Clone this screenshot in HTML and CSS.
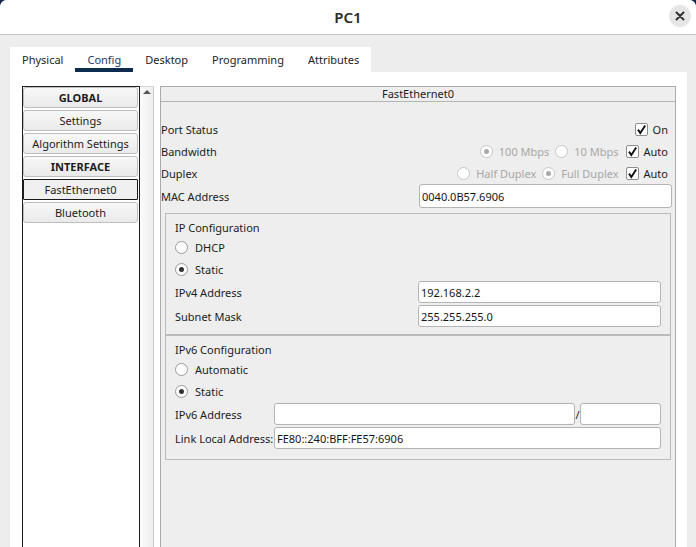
FILE: index.html
```html
<!DOCTYPE html>
<html lang="en">
<head>
<meta charset="utf-8">
<title>PC1</title>
<link rel="stylesheet" href="styles.css">
</head>
<body>
<div class="window">
  <header class="titlebar">
    <span class="title">PC1</span>
    <button class="close" aria-label="Close">
      <svg width="10" height="10" viewBox="0 0 10 10"><path d="M1.5 1.5 L8.5 8.5 M8.5 1.5 L1.5 8.5" stroke="#333" stroke-width="2" stroke-linecap="round"/></svg>
    </button>
  </header>
  <div class="content">
    <nav class="tabs">
      <span class="tab">Physical</span>
      <span class="tab active">Config</span>
      <span class="tab">Desktop</span>
      <span class="tab">Programming</span>
      <span class="tab">Attributes</span>
    </nav>
    <div class="pane">
      <div class="list">
        <div class="item bold">GLOBAL</div>
        <div class="item">Settings</div>
        <div class="item">Algorithm Settings</div>
        <div class="item bold">INTERFACE</div>
        <div class="item selected">FastEthernet0</div>
        <div class="item">Bluetooth</div>
      </div>
      <div class="scrollbar"><span class="arrow"></span></div>
      <section class="panel">
        <div class="panel-head">FastEthernet0</div>
        <div class="panel-body">
          <div class="row">
            <span class="label">Port Status</span>
            <div class="controls">
              <span class="check"><svg width="11" height="11" viewBox="0 0 11 11"><path d="M2 5.6 L4.3 9 L9.2 1.6" fill="none" stroke="#111" stroke-width="1.9"/></svg></span>
              <span>On</span>
            </div>
          </div>
          <div class="row">
            <span class="label">Bandwidth</span>
            <div class="controls">
              <span class="opt disabled"><span class="radio on"></span><span>100 Mbps</span></span>
              <span class="opt disabled"><span class="radio"></span><span>10 Mbps</span></span>
              <span class="check"><svg width="11" height="11" viewBox="0 0 11 11"><path d="M2 5.6 L4.3 9 L9.2 1.6" fill="none" stroke="#111" stroke-width="1.9"/></svg></span>
              <span>Auto</span>
            </div>
          </div>
          <div class="row">
            <span class="label">Duplex</span>
            <div class="controls">
              <span class="opt disabled"><span class="radio"></span><span>Half Duplex</span></span>
              <span class="opt disabled"><span class="radio on"></span><span>Full Duplex</span></span>
              <span class="check"><svg width="11" height="11" viewBox="0 0 11 11"><path d="M2 5.6 L4.3 9 L9.2 1.6" fill="none" stroke="#111" stroke-width="1.9"/></svg></span>
              <span>Auto</span>
            </div>
          </div>
          <div class="row mac">
            <span class="label">MAC Address</span>
            <input class="field mac-field" type="text" value="0040.0B57.6906">
          </div>

          <div class="group ipv4">
            <div class="group-title">IP Configuration</div>
            <div class="radio-row"><span class="radio"></span><span>DHCP</span></div>
            <div class="radio-row"><span class="radio on"></span><span>Static</span></div>
            <div class="field-row first">
              <span class="flabel wide">IPv4 Address</span>
              <input class="field grow" type="text" value="192.168.2.2">
            </div>
            <div class="field-row">
              <span class="flabel wide">Subnet Mask</span>
              <input class="field grow" type="text" value="255.255.255.0">
            </div>
          </div>

          <div class="group ipv6">
            <div class="group-title">IPv6 Configuration</div>
            <div class="radio-row"><span class="radio"></span><span>Automatic</span></div>
            <div class="radio-row"><span class="radio on"></span><span>Static</span></div>
            <div class="field-row first">
              <span class="flabel narrow">IPv6 Address</span>
              <input class="field addr6" type="text" value="">
              <span class="slash">/</span>
              <input class="field grow" type="text" value="">
            </div>
            <div class="field-row">
              <span class="flabel narrow">Link Local Address:</span>
              <input class="field grow" type="text" value="FE80::240:BFF:FE57:6906">
            </div>
          </div>
        </div>
      </section>
    </div>
  </div>
</div>
</body>
</html>
```

FILE: styles.css
```css
* {
  box-sizing: border-box;
  margin: 0;
  padding: 0;
}

html,
body {
  width: 696px;
  height: 547px;
  overflow: hidden;
  background: #17294a;
}

body {
  font-family: "Noto Sans", "DejaVu Sans", sans-serif;
  font-size: 11px;
  color: #1c1c1c;
}

.window {
  width: 696px;
  height: 547px;
  background: #ededed;
  border-radius: 7px 7px 0 0;
  overflow: hidden;
  display: flex;
  flex-direction: column;
}

/* Title bar */
.titlebar {
  height: 35px;
  flex: none;
  background: #ffffff;
  border-bottom: 1px solid #c6c6c6;
  display: flex;
  align-items: center;
  justify-content: center;
  position: relative;
}

.title {
  font-size: 15px;
  font-weight: 600;
  color: #2a2a2a;
}

.close {
  position: absolute;
  right: 5px;
  top: 5px;
  width: 22px;
  height: 22px;
  border-radius: 50%;
  background: #e5e5e5;
  border: none;
  display: flex;
  align-items: center;
  justify-content: center;
}

/* Content */
.content {
  flex: 1;
  min-height: 0;
  padding: 12px 9px 0 10px;
  display: flex;
  flex-direction: column;
}

.tabs {
  display: flex;
  align-self: flex-start;
  background: #ffffff;
  height: 25px;
  flex: none;
}

.tab {
  padding: 0 12px;
  display: flex;
  align-items: center;
  color: #222;
}

.tab.active {
  color: #1d3a66;
  box-shadow: inset 0 -4px 0 #0f2a4f;
}

.pane {
  flex: 1;
  min-height: 0;
  background: #ffffff;
  display: flex;
  padding: 14px 11px 0 12px;
}

/* Left list */
.list {
  width: 118px;
  flex: none;
  border: 1px solid #1e1e1e;
  border-bottom: none;
  background: #ffffff;
  padding-right: 1px;
  display: flex;
  flex-direction: column;
  gap: 2px;
}

.item {
  height: 21px;
  line-height: 19px;
  text-align: center;
  border: 1px solid #bdbdbd;
  border-radius: 3px;
  background: linear-gradient(#f8f8f8, #eaeaea);
  color: #1c1c1c;
  white-space: nowrap;
}

.item.bold {
  font-weight: 700;
}

.item.selected {
  border-color: #1a1a1a;
  border-radius: 1px;
  background: #f0f0f0;
}

.scrollbar {
  width: 14px;
  flex: none;
  border-right: 1px solid #cacaca;
  border-top: 1px solid #d6d6d6;
  background: linear-gradient(to right, #fbfbfb, #eeeeee);
  display: flex;
  justify-content: center;
  padding-top: 3px;
}

.arrow {
  width: 0;
  height: 0;
  border-left: 4px solid transparent;
  border-right: 4px solid transparent;
  border-bottom: 4px solid #555;
}

/* Right panel */
.panel {
  width: 516px;
  flex: none;
  margin-left: 6px;
  border: 1px solid #ababab;
  border-bottom: none;
  background: #eeeeee;
  display: flex;
  flex-direction: column;
  min-width: 0;
}

.panel-head {
  height: 15px;
  line-height: 13px;
  text-align: center;
  border-bottom: 1px solid #b4b4b4;
}

.panel-body {
  padding-top: 16px;
  display: flex;
  flex-direction: column;
  min-width: 0;
}

.row {
  display: flex;
  align-items: center;
  height: 22px;
}

.row .label {
  flex: 1;
}

.controls {
  display: flex;
  align-items: center;
  margin-right: 7px;
}

.opt {
  display: flex;
  align-items: center;
  gap: 6px;
  margin-right: 6px;
}

.opt.disabled {
  color: #a7a7a7;
}

.check {
  width: 13px;
  height: 13px;
  border: 1px solid #8e8e8e;
  border-radius: 2px;
  background: #ffffff;
  display: flex;
  align-items: center;
  justify-content: center;
  margin: 0 5px 0 1px;
}

.radio {
  width: 13px;
  height: 13px;
  border: 1px solid #9a9a9a;
  border-radius: 50%;
  background: #ffffff;
  display: flex;
  align-items: center;
  justify-content: center;
  flex: none;
}

.radio.on::after {
  content: "";
  width: 5px;
  height: 5px;
  border-radius: 50%;
  background: #333333;
}

.disabled .radio {
  border-color: #c6c6c6;
}

.disabled .radio.on::after {
  background: #a9a9a9;
}

.row.mac {
  height: 24px;
}

.field {
  font: inherit;
  color: #151515;
  background: #ffffff;
  border: 1px solid #b4b4b4;
  border-radius: 3px;
  height: 22px;
  padding: 0 2px;
  outline: none;
  min-width: 0;
}

.mac-field {
  width: 253px;
  height: 24px;
  margin-right: 3px;
}

/* Group boxes */
.group {
  border: 1px solid #bbbbbb;
  margin: 0 4px;
  padding: 5px 9px 7px;
  display: flex;
  flex-direction: column;
  min-width: 0;
}

.group.ipv4 {
  margin-top: 5px;
}

.group.ipv6 {
  padding-bottom: 10px;
}

.group-title {
  height: 17px;
  line-height: 17px;
}

.radio-row {
  height: 22px;
  display: flex;
  align-items: center;
  gap: 7px;
}

.field-row {
  display: flex;
  align-items: center;
  height: 22px;
  margin-top: 2px;
  min-width: 0;
}

.field-row.first {
  margin-top: 1px;
}

.flabel {
  flex: none;
  white-space: nowrap;
}

.flabel.wide {
  width: 243px;
}

.flabel.narrow {
  width: 99px;
}

.grow {
  flex: 1 1 0;
  min-width: 0;
}

.addr6 {
  width: 301px;
  flex: none;
}

.slash {
  width: 5px;
  text-align: center;
  flex: none;
}
```
